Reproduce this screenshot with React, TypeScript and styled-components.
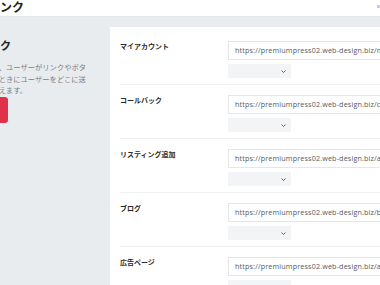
import styled, { createGlobalStyle } from 'styled-components';

const Global = createGlobalStyle`
  html, body {
    margin: 0;
    padding: 0;
    overflow: hidden;
    background: #e9ecef;
  }
  body {
    font-family: "Open Sans", "Noto Sans CJK JP", sans-serif;
    color: #222;
  }
`

const Page = styled.div`
  width: 380px;
  height: 285px;
  overflow: hidden;
  display: flex;
  flex-direction: column;
`

const Header = styled.div`
  height: 17px;
  flex: 0 0 17px;
  background: #fff;
  border-bottom: 1px solid #e3e6ea;
  box-sizing: border-box;
  display: flex;
  align-items: flex-start;
  justify-content: space-between;
  overflow: hidden;
`

const PageTitle = styled.h1`
  margin: 0 0 0 -60px;
  font-size: 12px;
  line-height: 14px;
  font-weight: 700;
  white-space: nowrap;
  font-family: "Noto Sans CJK JP", sans-serif;
`

const Marker = styled.span`
  width: 3px;
  height: 3px;
  margin-top: 5px;
  background: #c9c6f3;
`

const Main = styled.div`
  flex: 1;
  display: flex;
  padding-top: 10px;
  overflow: hidden;
`

const Side = styled.div`
  flex: 0 0 110px;
  overflow: hidden;
`

const SideInner = styled.div`
  margin-left: -67px;
  padding-top: 11px;
`

const SideTitle = styled.h2`
  margin: 0 0 0 1px;
  font-size: 11px;
  line-height: 14px;
  font-weight: 700;
  white-space: nowrap;
  font-family: "Noto Sans CJK JP", sans-serif;
`

const Desc = styled.p`
  margin: 10px 0 0;
  font-size: 7.3px;
  line-height: 11.6px;
  color: #7a7f86;
  white-space: nowrap;
  font-family: "Noto Sans CJK JP", sans-serif;
`

const SaveButton = styled.button`
  display: block;
  margin-top: 0;
  width: 75px;
  height: 26px;
  border: none;
  border-radius: 3px;
  background: #e0314b;
  color: #fff;
`

const Card = styled.div`
  flex: 0 0 300px;
  background: #fff;
  padding: 4px 0 0 10px;
`

const Row = styled.div`
  display: grid;
  grid-template-columns: 108px 1fr;
  padding: 10px 0 6px;
  border-bottom: 1px solid #eeeff1;
`

const Label = styled.div`
  padding-top: 1px;
  font-size: 7px;
  line-height: 9px;
  font-weight: 700;
  color: #2a2a2a;
  font-family: "Noto Sans CJK JP", sans-serif;
`

const Fields = styled.div`
  display: flex;
  flex-direction: column;
  gap: 4px;
`

const UrlInput = styled.div`
  height: 19px;
  box-sizing: border-box;
  border: 1px solid #e4e6e9;
  padding: 0 6px;
  font-size: 7.2px;
  letter-spacing: 0.15px;
  line-height: 17px;
  color: #555a60;
  white-space: nowrap;
  overflow: hidden;
  font-family: "Open Sans", sans-serif;
`

const Select = styled.div`
  width: 63px;
  height: 14px;
  background: #f3f4f6;
  display: flex;
  align-items: center;
  justify-content: flex-end;
  padding-right: 5px;
  box-sizing: border-box;
`

const rows = [
  { label: 'マイアカウント', url: 'https://premiumpress02.web-design.biz/my-account/' },
  { label: 'コールバック', url: 'https://premiumpress02.web-design.biz/callback/' },
  { label: 'リスティング追加', url: 'https://premiumpress02.web-design.biz/add-listing/' },
  { label: 'ブログ', url: 'https://premiumpress02.web-design.biz/blog/' },
  { label: '広告ページ', url: 'https://premiumpress02.web-design.biz/advertising/' },
]

const Chevron = () => (
  <svg width="5" height="3" viewBox="0 0 5 3">
    <path d="M0.5 0.5 L2.5 2.5 L4.5 0.5" fill="none" stroke="#555" strokeWidth="0.9" />
  </svg>
)

const App = () => (
  <Page>
    <Global />
    <Header>
      <PageTitle>カスタムリンク</PageTitle>
      <Marker />
    </Header>
    <Main>
      <Side>
        <SideInner>
          <SideTitle>カスタムリンク</SideTitle>
          <Desc>
            このセクションでは、ユーザーがリンクやボタ<br />
            ン等をクリックしたときにユーザーをどこに送<br />
            るかを設定で切り替えます。
          </Desc>
          <SaveButton />
        </SideInner>
      </Side>
      <Card>
        {rows.map(row => (
          <Row key={row.label}>
            <Label>{row.label}</Label>
            <Fields>
              <UrlInput>{row.url}</UrlInput>
              <Select><Chevron /></Select>
            </Fields>
          </Row>
        ))}
      </Card>
    </Main>
  </Page>
)

export default App;
